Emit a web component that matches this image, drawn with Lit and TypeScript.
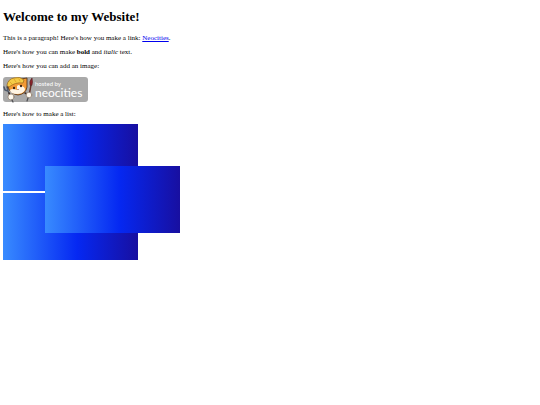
import { LitElement, html, css, svg } from "lit";
import { customElement } from "lit/decorators.js";

@customElement("hosted-badge")
class HostedBadge extends LitElement {
  static styles = css`
    :host {
      display: block;
    }
    .badge {
      display: block;
      width: 85px;
      height: 26px;
    }
    .plate {
      fill: #a9a9a9;
    }
    .words {
      fill: #fff;
      font-family: Lato, "Noto Sans", sans-serif;
    }
    .small {
      font-size: 6px;
    }
    .large {
      font-size: 12px;
    }
  `;

  private cat() {
    return svg`
      <g stroke-linejoin="round" stroke-linecap="round">
        <path d="M1 10 L2 13 L5 14 L7 18 M4 10 L5 13" fill="none" stroke="#4f5868" stroke-width="1.5"/>
        <path d="M5 10 L6 4 Q12 0 18 2 L24 1 L24 10 Q23 17 15 18 Q7 17 5 10Z" fill="#f29a35" stroke="#4a2b14" stroke-width=".8"/>
        <path d="M14 9 Q16 7 17 9 Q22 9 22 13 Q20 17 14 17 Q7 17 7 13 Q10 11 14 13Z" fill="#fff5e4"/>
        <path d="M4 8 Q5 2 11 1 Q17 -1 21 3 L20 6 Q12 5 6 10Z" fill="#f5cb45" stroke="#9a691c" stroke-width=".7"/>
        <path d="M7 5 L9 7 M11 2 L13 5 M16 2 L17 4" stroke="#d99a20" stroke-width=".7"/>
        <ellipse cx="11" cy="11" rx="1" ry="1.3" fill="#2d1b12"/>
        <ellipse cx="18" cy="9" rx="1" ry="1.3" fill="#2d1b12"/>
        <path d="M14 12 L16 12 L15 13Z" fill="#8b3322"/>
        <path d="M28 8 L26 19" stroke="#653329" stroke-width="1.4"/>
        <path d="M27 8 Q26 4 29 1 Q30 5 29 8Z" fill="#8e242b" stroke="#501d20" stroke-width=".6"/>
        <path d="M6 16 L8 22 M22 16 L26 18" stroke="#3e2c25" stroke-width="1.5"/>
        <circle cx="8" cy="20" r="3" fill="#fffaf0" stroke="#806b58" stroke-width=".6"/>
        <circle cx="26" cy="18" r="2.8" fill="#fffaf0" stroke="#806b58" stroke-width=".6"/>
        <path d="M9 23 L10 25 M25 21 L24 24" stroke="#4c4c50" stroke-width="1.2"/>
      </g>`;
  }

  render() {
    return html`
      <svg class="badge" viewBox="0 0 85 26" role="img" aria-label="Hosted by Neocities">
        <rect class="plate" width="85" height="25" rx="3" />
        ${this.cat()}
        <text class="words small" x="32" y="9">hosted by</text>
        <text class="words large" x="32" y="20">neocities</text>
      </svg>
    `;
  }
}

@customElement("app-root")
class AppRoot extends LitElement {
  static styles = css`
    :host {
      display: block;
      padding: 9px 3px;
      color: #000;
      font: 7px/8px "Liberation Serif", "Times New Roman", serif;
    }
    .title {
      margin: 0 0 9px;
      font-size: 13px;
      line-height: 16px;
    }
    .text {
      margin: 0 0 6px;
    }
    .picture {
      margin: 7px 0;
    }
    .link {
      color: #0000ee;
    }
    .boxes {
      position: relative;
      display: grid;
      gap: 2px;
      justify-content: start;
    }
    .box {
      width: 135px;
      height: 67px;
      background: linear-gradient(
        to right,
        #388bff,
        #0528f2 55%,
        #180fa0
      );
    }
    .over {
      position: absolute;
      top: 42px;
      left: 42px;
    }
  `;

  render() {
    return html`
      <h1 class="title">Welcome to my Website!</h1>
      <p class="text">
        This is a paragraph! Here's how you make a link:
        <a class="link" href="https://neocities.org">Neocities</a>.
      </p>
      <p class="text">
        Here's how you can make <strong>bold</strong> and <em>italic</em> text.
      </p>
      <p class="text">Here's how you can add an image:</p>
      <hosted-badge class="picture"></hosted-badge>
      <p class="text">Here's how to make a list:</p>
      <div class="boxes">
        <div class="box"></div>
        <div class="box"></div>
        <div class="box over"></div>
      </div>
    `;
  }
}
